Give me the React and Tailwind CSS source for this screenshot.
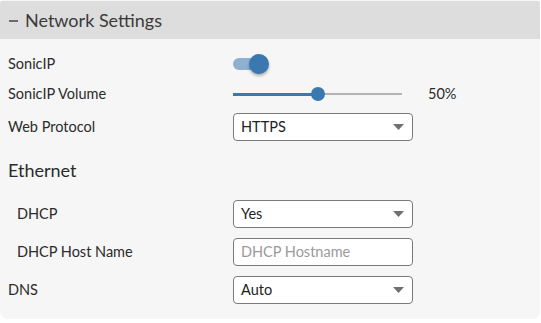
import React from 'react';

const font = { fontFamily: 'Lato, "Noto Sans", sans-serif' };

const Caret = () => (
    <svg width="11" height="6" viewBox="0 0 11 6" className="shrink-0">
        <path d="M0 0 H11 L5.5 6 Z" fill="#707070" />
    </svg>
);

const Select = ({ value, className = '' }) => (
    <div className={`flex items-center justify-between h-[28px] w-[180px] bg-white border border-[#7a7a7a] rounded-[4px] pl-[7px] pr-[8px] text-[14.5px] text-[#222] ${className}`}>
        <span>{value}</span>
        <Caret />
    </div>
);

const Row = ({ label, children, className = '', labelClass = '' }) => (
    <div className={`flex items-center ${className}`}>
        <div className={`w-[225px] shrink-0 text-[14.5px] text-[#2b2b2b] ${labelClass}`}>{label}</div>
        {children}
    </div>
);

export default function App() {
    return (
        <div className="w-[541px] h-[323px] bg-white" style={font}>
            <div className="w-[540px] h-[319px] bg-[#f6f6f6] rounded-b-[8px] rounded-t-[4px] overflow-hidden flex flex-col">
                {/* Header */}
                <div className="h-[38px] mt-[1px] bg-[#dddddd] flex items-center pl-[9px] text-[18px] text-[#3a3a3a]">
                    <span className="w-[9px] h-[2px] bg-[#6b6b6b] mr-[7px] mt-[1px]"></span>
                    <span>Network Settings</span>
                </div>

                <div className="pl-[8px] flex flex-col">
                    <Row label="SonicIP" className="mt-[14px] h-[22px]">
                        <div className="relative w-[40px] h-[22px]">
                            <div className="absolute left-0 top-[5px] w-[30px] h-[12px] rounded-full bg-[#8fb0d0]"></div>
                            <div className="absolute left-[16px] top-[1px] w-[20px] h-[20px] rounded-full bg-[#3b78b0] shadow-[0_2px_3px_rgba(0,0,0,0.3)]"></div>
                        </div>
                    </Row>

                    <Row label="SonicIP Volume" className="mt-[9px] h-[20px]">
                        <div className="relative w-[169px] h-[16px] flex items-center">
                            <div className="h-[3px] w-[85px] bg-[#3b78b0]"></div>
                            <div className="h-[2px] flex-1 bg-[#b5b5b5]"></div>
                            <div className="absolute left-[78px] top-[1px] w-[14px] h-[14px] rounded-full bg-[#3b78b0]"></div>
                        </div>
                        <span className="ml-[26px] text-[14.5px] text-[#2b2b2b]">50%</span>
                    </Row>

                    <Row label="Web Protocol" className="mt-[9px]">
                        <Select value="HTTPS" />
                    </Row>

                    <div className="mt-[17px] text-[18px] text-[#2b2b2b] h-[24px] leading-[24px]">Ethernet</div>

                    <Row label="DHCP" className="mt-[18px]" labelClass="pl-[9px] w-[223px]">
                        <Select value="Yes" />
                    </Row>

                    <Row label="DHCP Host Name" className="mt-[10px]" labelClass="pl-[9px] w-[223px]">
                        <div className="flex items-center h-[28px] w-[180px] bg-white border border-[#7a7a7a] rounded-[4px] pl-[7px] text-[14.5px] text-[#9a9a9a]">
                            DHCP Hostname
                        </div>
                    </Row>

                    <Row label="DNS" className="mt-[10px]">
                        <Select value="Auto" />
                    </Row>
                </div>
            </div>
        </div>
    );
}
